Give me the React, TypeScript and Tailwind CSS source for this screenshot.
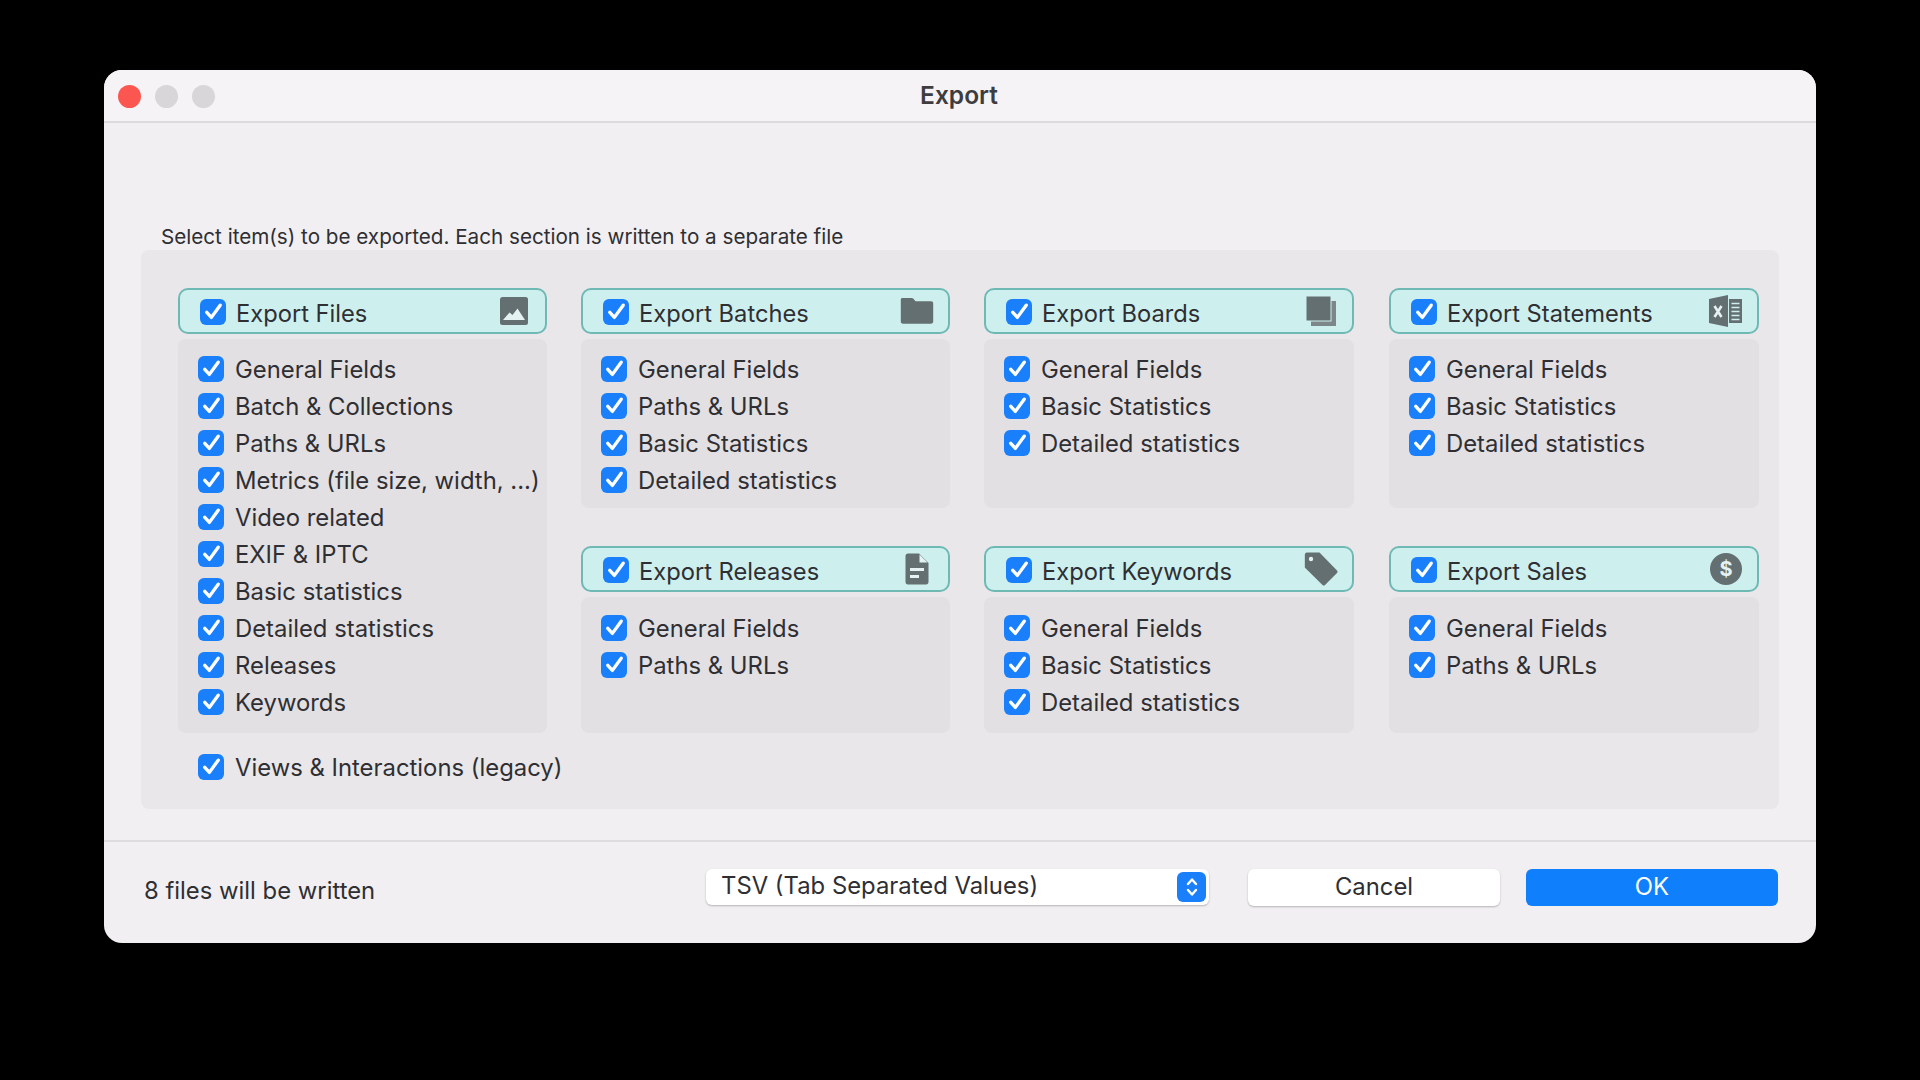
import type { ReactNode } from 'react';

// ─── Icons ───────────────────────────────────────────────────────────────────

function Check({ className = '' }: { className?: string }) {
  return (
    <span className={`flex h-[26px] w-[26px] shrink-0 items-center justify-center rounded-[6px] bg-[#1a7ffb] ${className}`}>
      <svg width="21" height="21" viewBox="0 0 20 20" fill="none">
        <path d="M3.6 10.8 L8 15.6 L16.4 4" stroke="white" strokeWidth="3.2" strokeLinecap="round" strokeLinejoin="round" />
      </svg>
    </span>
  );
}

const iconFill = '#646f72';

function ImageIcon() {
  return (
    <svg width="30" height="30" viewBox="0 0 30 30">
      <rect x="1" y="1" width="28" height="28" rx="2.5" fill={iconFill} />
      <path d="M4 24 L10.5 16.5 L13.5 19 L18.5 12.5 L26 24 Z" fill="#e4f3f2" />
    </svg>
  );
}

function FolderIcon() {
  return (
    <svg width="34" height="28" viewBox="0 0 34 28">
      <path
        d="M2.5 1 H11.5 C13 1 13.6 1.8 14.5 3 L15.5 4.3 H31 C32.4 4.3 33.2 5.1 33.2 6.5 V24.5 C33.2 25.9 32.4 26.7 31 26.7 H3 C1.6 26.7 .8 25.9 .8 24.5 V2.7 C.8 1.6 1.4 1 2.5 1 Z"
        fill={iconFill}
      />
    </svg>
  );
}

function BoardsIcon() {
  return (
    <svg width="30" height="32" viewBox="0 0 30 32">
      <rect x="5" y="6" width="25" height="25" fill="#7d8688" />
      <rect x="0" y="1" width="25" height="25" fill={iconFill} stroke="#cdf0ef" strokeWidth="1" />
    </svg>
  );
}

function ExcelIcon() {
  return (
    <svg width="34" height="34" viewBox="0 0 34 34">
      <path d="M0 5 L19 1 V33 L0 29 Z" fill={iconFill} />
      <path d="M5.5 12 L12.5 23 M12.5 12 L5.5 23" stroke="#e4f3f2" strokeWidth="2.6" />
      <rect x="20" y="5" width="13" height="24" fill={iconFill} />
      <path d="M22.5 9.5 H30.5 M22.5 13.5 H30.5 M22.5 17.5 H30.5 M22.5 21.5 H30.5 M22.5 25.5 H30.5" stroke="#cdf0ef" strokeWidth="1.6" />
    </svg>
  );
}

function FileIcon() {
  return (
    <svg width="24" height="32" viewBox="0 0 24 32">
      <path d="M3 0.5 H14 L23.5 10 V29 C23.5 30.6 22.6 31.5 21 31.5 H3 C1.4 31.5 .5 30.6 .5 29 V3 C.5 1.4 1.4 .5 3 .5 Z" fill={iconFill} />
      <path d="M14.5 1.5 V9.5 H22.5 Z" fill="#e4f3f2" />
      <rect x="5" y="15" width="14" height="3" fill="#e4f3f2" />
      <rect x="5" y="22" width="9" height="3" fill="#e4f3f2" />
    </svg>
  );
}

function TagIcon() {
  return (
    <svg width="34" height="34" viewBox="0 0 34 34">
      <path d="M3 0.5 H15.5 L33 18.5 C33.7 19.3 33.7 20.3 33 21 L21 33 C20.3 33.7 19.3 33.7 18.5 33 L0.8 15.5 V3 C.8 1.4 1.5 .5 3 .5 Z" fill={iconFill} />
      <circle cx="7" cy="7" r="2.2" fill="#e4f3f2" />
    </svg>
  );
}

function DollarIcon() {
  return (
    <div className="flex h-[32px] w-[32px] items-center justify-center rounded-full bg-[#646f72] text-[20px] font-bold leading-none text-[#e4f3f2]">
      $
    </div>
  );
}

// ─── Sections ────────────────────────────────────────────────────────────────

function Row({ label }: { label: string }) {
  return (
    <div className="flex h-[37px] items-center gap-[11px]">
      <Check className="-mt-[2px]" />
      <span className="whitespace-nowrap">{label}</span>
    </div>
  );
}

function Section({ title, icon, items, pt, className = '' }: { title: string; icon: ReactNode; items: string[]; pt: string; className?: string }) {
  return (
    <div className={`flex flex-col gap-[5px] ${className}`}>
      <div className="flex h-[46px] items-center rounded-[10px] border-2 border-[#6fb9b5] bg-[#cdf0ef] pl-[20px] pr-[14px]">
        <Check className="mt-[1px]" />
        <span className="ml-[10px] mt-[5px] text-[23.7px]">{title}</span>
        <span className="ml-auto flex h-[34px] w-[34px] items-center justify-center">{icon}</span>
      </div>
      <div className={`flex-1 rounded-[8px] bg-[#e2e0e3] pl-[20px] ${pt}`}>
        {items.map((item) => (
          <Row key={item} label={item} />
        ))}
      </div>
    </div>
  );
}

const threeStats = ['General Fields', 'Basic Statistics', 'Detailed statistics'];

export default function App() {
  return (
    <div className="flex h-[1080px] w-[1920px] items-start bg-black pl-[104px] pt-[70px] font-['Inter','Liberation_Sans',sans-serif] text-[23.85px] text-[#2f2f33]">
      <div className="flex h-[873px] w-[1712px] flex-col overflow-hidden rounded-[18px] bg-[#f2eff2]">
        {/* Title bar */}
        <div className="relative flex h-[53px] shrink-0 items-center justify-center border-b-2 border-[#dcdadc] bg-[#f6f3f6]">
          <div className="absolute left-[14px] top-[15px] flex gap-[14px]">
            <span className="h-[23px] w-[23px] rounded-full bg-[#fb5650]" />
            <span className="h-[23px] w-[23px] rounded-full bg-[#d8d6d8]" />
            <span className="h-[23px] w-[23px] rounded-full bg-[#d8d6d8]" />
          </div>
          <span className="-ml-[2px] text-[24.5px] font-semibold text-[#3d3d40]">Export</span>
        </div>

        {/* Body */}
        <p className="ml-[57px] mt-[100px] h-[27px] text-[20.65px] leading-[27px] text-[#2f2f33]">
          Select item(s) to be exported. Each section is written to a separate file
        </p>
        <div className="mx-[37px] h-[559px] rounded-[8px] bg-[#e9e7ea] pl-[37px] pt-[38px]">
          <div className="grid grid-cols-[369px_369px_370px_371px] grid-rows-[220px_187px] gap-x-[34px] gap-y-[38px]">
            <Section
              className="row-span-2"
              title="Export Files"
              icon={<ImageIcon />}
              pt="pt-[12px]"
              items={['General Fields', 'Batch & Collections', 'Paths & URLs', 'Metrics (file size, width, ...)', 'Video related', 'EXIF & IPTC', 'Basic statistics', 'Detailed statistics', 'Releases', 'Keywords']}
            />
            <Section title="Export Batches" icon={<FolderIcon />} pt="pt-[12px]" items={['General Fields', 'Paths & URLs', 'Basic Statistics', 'Detailed statistics']} />
            <Section title="Export Boards" icon={<BoardsIcon />} pt="pt-[12px]" items={threeStats} />
            <Section className="ml-[1px]" title="Export Statements" icon={<ExcelIcon />} pt="pt-[12px]" items={threeStats} />
            <Section title="Export Releases" icon={<FileIcon />} pt="pt-[13px]" items={['General Fields', 'Paths & URLs']} />
            <Section title="Export Keywords" icon={<TagIcon />} pt="pt-[13px]" items={threeStats} />
            <Section className="ml-[1px]" title="Export Sales" icon={<DollarIcon />} pt="pt-[13px]" items={['General Fields', 'Paths & URLs']} />
          </div>
          <div className="ml-[20px] mt-[16px]">
            <Row label="Views & Interactions (legacy)" />
          </div>
        </div>

        {/* Footer */}
        <div className="mt-[31px] flex flex-1 items-start border-t-2 border-[#dedcde] pl-[41px] pt-[27px]">
          <span className="mt-[4px] w-[561px] -translate-x-[1px]">8 files will be written</span>
          <div className="flex h-[36px] w-[503px] items-center rounded-[6px] bg-white pl-[15px] pr-[3px] shadow-[0_1px_2px_rgba(0,0,0,0.25)]">
            <span className="-mt-[2px]">TSV (Tab Separated Values)</span>
            <span className="ml-auto flex h-[30px] w-[29px] items-center justify-center rounded-[6px] bg-[#1a7ffb]">
              <svg width="16" height="24" viewBox="0 0 16 24" fill="none" stroke="white" strokeWidth="2.4" strokeLinecap="round" strokeLinejoin="round">
                <path d="M4 9 L8 4.5 L12 9 M4 15 L8 19.5 L12 15" />
              </svg>
            </span>
          </div>
          <button className="ml-[39px] h-[37px] w-[252px] rounded-[6px] bg-white pb-[2px] text-center shadow-[0_1px_2px_rgba(0,0,0,0.25)]">Cancel</button>
          <button className="ml-[26px] h-[37px] w-[252px] rounded-[6px] bg-[#0f7ffb] pb-[2px] text-center text-white">OK</button>
        </div>
      </div>
    </div>
  );
}
